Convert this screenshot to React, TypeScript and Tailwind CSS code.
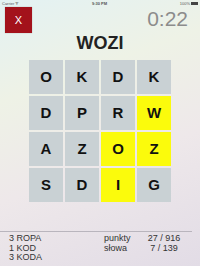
import React from "react"

const ROWS = [
  ["O", "K", "D", "K"],
  ["D", "P", "R", "W"],
  ["A", "Z", "O", "Z"],
  ["S", "D", "I", "G"],
]

// cells that are part of the current word
const PICKED = new Set(["1-3", "2-2", "2-3", "3-2"])

const WORDS = ["3 ROPA", "1 KOD", "3 KODA"]

function StatusBar() {
  return (
    <div className="flex h-[7px] items-center justify-between px-[2px] text-[4px] leading-none text-[#555]">
      <span>Carrier ᯤ</span>
      <span className="font-bold">9:30 PM</span>
      <span className="flex items-center gap-[1px]">
        100%
        <span className="inline-block h-[3px] w-[7px] bg-[#444]" />
      </span>
    </div>
  )
}

export default function App() {
  return (
    <div
      className="flex h-[266px] w-[200px] flex-col overflow-hidden bg-[linear-gradient(160deg,#e3f2f3_0%,#eef2e6_30%,#eee8ea_60%,#e2dce6_100%)]"
      style={{ fontFamily: '"Liberation Sans", Arial, sans-serif' }}
    >
      <StatusBar />

      {/* Header: quit button + timer */}
      <div className="flex h-[27px] items-start justify-between">
        <button className="ml-[5px] flex h-[26px] w-[27px] items-center justify-center bg-[#a3121b] text-[11px] leading-none text-white shadow-[0_0_1px_rgba(0,0,0,0.3)]">
          X
        </button>
        <span className="mr-[12px] mt-[1px] text-[21px] leading-[21px] text-[#8c8c8c]">0:22</span>
      </div>

      {/* Current word */}
      <div className="text-center text-[18px] font-bold leading-[18px] text-[#222]">WOZI</div>

      {/* Letter grid */}
      <div className="mx-auto mt-[8px] grid w-[142px] grid-cols-4 gap-[2px]">
        {ROWS.map((row, r) =>
          row.map((ch, c) => (
            <div
              key={`${r}-${c}`}
              className={`flex h-[34px] items-center justify-center text-[15px] font-bold text-[#111] ${
                PICKED.has(`${r}-${c}`) ? "bg-[#fbfb0c]" : "bg-[#c9d1d4]"
              }`}
            >
              {ch}
            </div>
          ))
        )}
      </div>

      {/* Divider */}
      <div className="mr-[8px] mt-[29px] h-px bg-[#b9b5bd]" />

      {/* Found words + stats */}
      <div className="mt-[2px] flex text-[9px] leading-[9.5px] text-[#333]">
        <div className="ml-[9px] w-[95px]">
          {WORDS.map((w) => (
            <div key={w}>{w}</div>
          ))}
        </div>
        <div className="w-[40px]">
          <div>punkty</div>
          <div>słowa</div>
        </div>
        <div className="w-[40px] text-center">
          <div>27 / 916</div>
          <div>7 / 139</div>
        </div>
      </div>
    </div>
  )
}
